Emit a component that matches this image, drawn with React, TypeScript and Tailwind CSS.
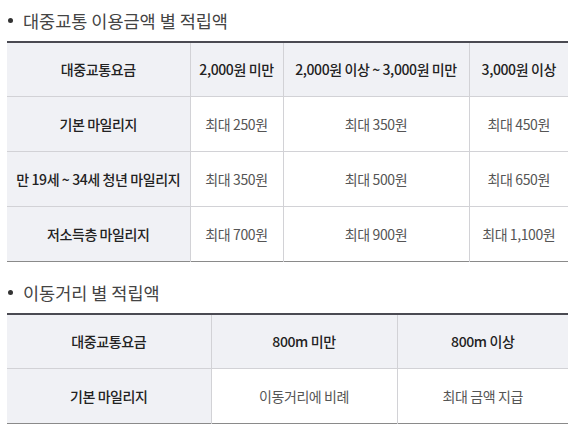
import React from 'react';

type Row = { label: string; cells: string[] };

const fareCols = ['2,000원 미만', '2,000원 이상 ~ 3,000원 미만', '3,000원 이상'];
const fareRows: Row[] = [
  { label: '기본 마일리지', cells: ['최대 250원', '최대 350원', '최대 450원'] },
  { label: '만 19세 ~ 34세 청년 마일리지', cells: ['최대 350원', '최대 500원', '최대 650원'] },
  { label: '저소득층 마일리지', cells: ['최대 700원', '최대 900원', '최대 1,100원'] },
];

const distCols = ['800m 미만', '800m 이상'];
const distRows: Row[] = [{ label: '기본 마일리지', cells: ['이동거리에 비례', '최대 금액 지급'] }];

function Title({ children }: { children: React.ReactNode }) {
  return (
    <h3 className="flex items-center gap-[10px] pl-[1px] text-[17.5px] font-normal text-[#444] leading-none">
      <span className="inline-block w-[5px] h-[5px] rounded-full bg-[#333]" />
      {children}
    </h3>
  );
}

function MileageTable({ cols, rows, widths }: { cols: string[]; rows: Row[]; widths: string[] }) {
  return (
    <table className="w-[561px] table-fixed border-collapse border-t-2 border-t-[#4a4a52] border-b border-b-[#8a8a8a] text-[14px] tracking-[-0.4px]">
      <colgroup>
        {widths.map((w, i) => (
          <col key={i} className={w} />
        ))}
      </colgroup>
      <thead>
        <tr className="h-[55px] bg-[#f0f1f5] text-[#222]">
          <th className="font-medium border-r border-b border-[#d2d2d6]">대중교통요금</th>
          {cols.map((c, i) => (
            <th key={c} className={`font-medium border-b border-[#d2d2d6] ${i < cols.length - 1 ? 'border-r' : ''}`}>
              {c}
            </th>
          ))}
        </tr>
      </thead>
      <tbody>
        {rows.map((r, ri) => (
          <tr key={r.label} className="h-[55px]">
            <th className={`bg-[#f0f1f5] text-[#222] font-medium border-r border-[#d2d2d6] ${ri < rows.length - 1 ? 'border-b' : ''}`}>
              {r.label}
            </th>
            {r.cells.map((c, i) => (
              <td
                key={i}
                className={`text-center text-[#555] border-[#d2d2d6] ${i < r.cells.length - 1 ? 'border-r' : ''} ${ri < rows.length - 1 ? 'border-b' : ''}`}
              >
                {c}
              </td>
            ))}
          </tr>
        ))}
      </tbody>
    </table>
  );
}

export default function App() {
  return (
    <div className="w-[575px] h-[431px] bg-white overflow-hidden pl-[7px] pt-[12px]" style={{ fontFamily: '"Noto Sans CJK KR", "Noto Sans", sans-serif' }}>
      <Title>대중교통 이용금액 별 적립액</Title>
      <div className="mt-[11px]">
        <MileageTable cols={fareCols} rows={fareRows} widths={['w-[183px]', 'w-[93px]', 'w-[186px]', 'w-[99px]']} />
      </div>
      <div className="mt-[22px]">
        <Title>이동거리 별 적립액</Title>
      </div>
      <div className="mt-[11px]">
        <MileageTable cols={distCols} rows={distRows} widths={['w-[204px]', 'w-[186px]', 'w-[171px]']} />
      </div>
    </div>
  );
}
